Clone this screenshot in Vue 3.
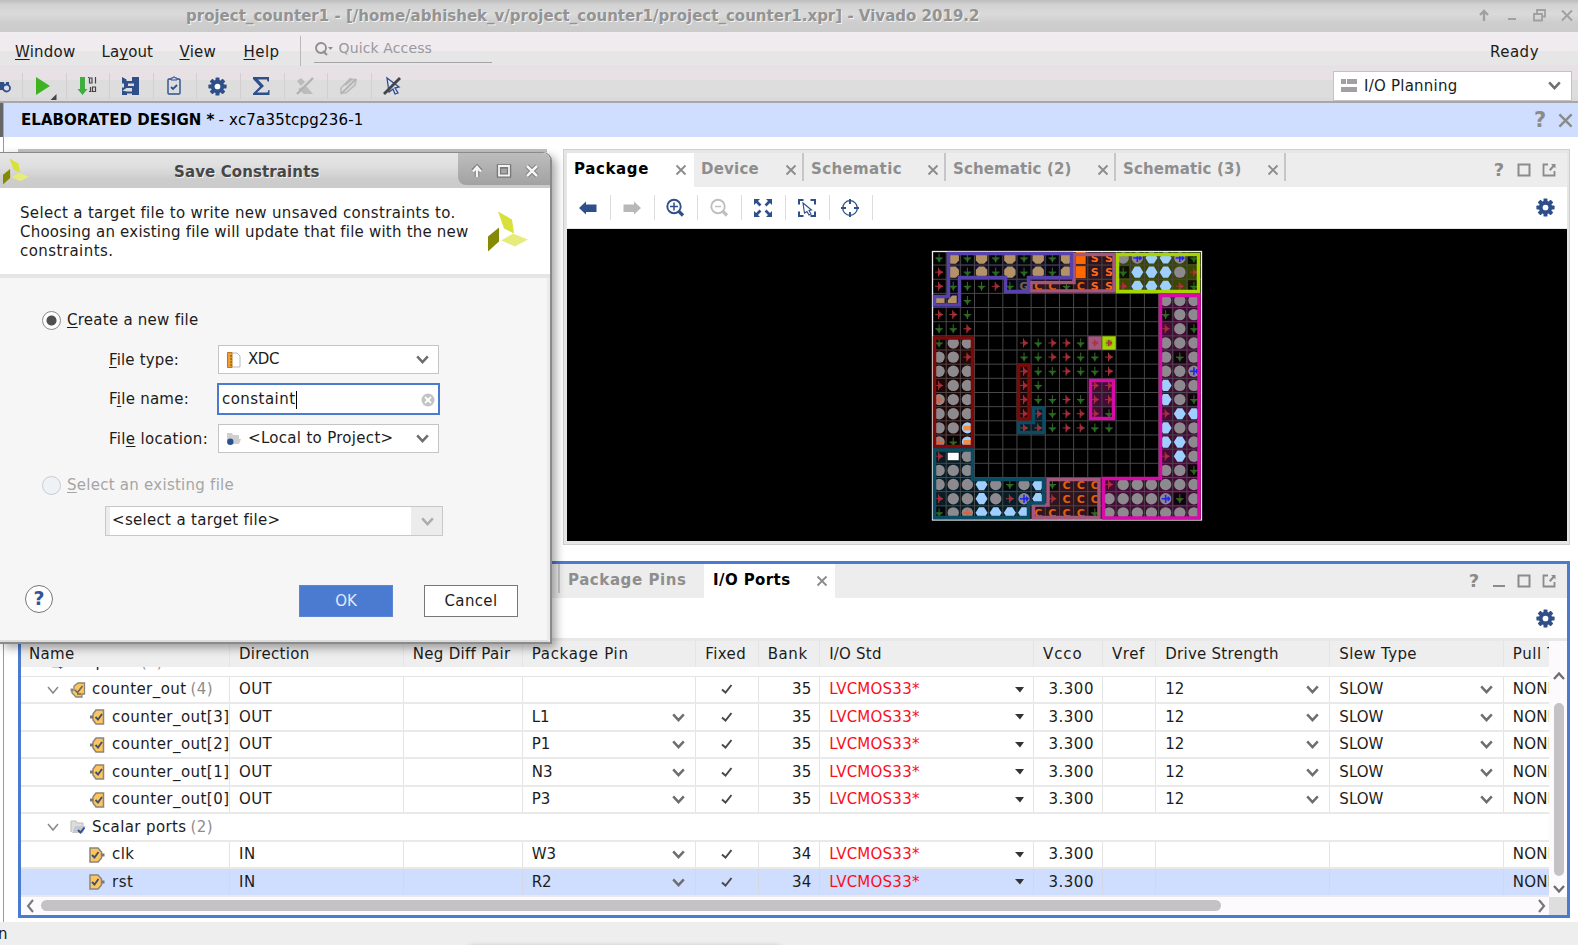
<script setup>
// Spreads the letters of an element so that its text fills the given width.
const vFit = {
  mounted(el, { value }) {
    if (!value) return
    const w = el.getBoundingClientRect().width
    el.style.letterSpacing = (value + 1.5 - w) / el.textContent.length + 'px'
  }
}

const cellMap = [
  'gtgtgtgtgtsSSoBbbBg',
  'rtgtgtgtgtsSSgbbbor',
  'rgggrgGCCgCSSrbbbrg',
  'TUg.............ooo',
  'rrg.............goo',
  'ggr.............rog',
  'goo...rgrrgrr...ooo',
  'oor...ggrrggr...ogo',
  'ooo...rggrggr...ooB',
  'roo...rg...rr...boo',
  'Poo...rggrgrr...bog',
  'ooo...rrgrrrg...rbb',
  'ooQ...rrgrrgg...boo',
  'PgQ.............bbo',
  'rwo.............rbo',
  'ooo.............oog',
  'ooobogobgCCCroooooo',
  'rooborBbrCCCooooBgo',
  'goPbbbbCCCCgooooooo'
]
const P = 14.16
const cells = []
cellMap.forEach((row, r) =>
  [...row].forEach((k, c) => {
    if (k !== '.') cells.push({ k, x: 932 + P * (c + 0.5), y: 250.9 + P * (r + 0.5), id: r * 19 + c })
  })
)
const lines = Array.from({ length: 18 }, (_, i) => i + 1)

const mainTools = ['play', 'bits', 'hier', 'clip', 'gear', 'sigma', 'noflask', 'nopen', 'nocursor']
const viewTools = ['left', 'right', 'zin', 'zout', 'expand', 'select', 'target']
const tabs = [
  { t: 'Package', f: 73.5, w: 127, on: true },
  { t: 'Device', f: 56.5, w: 110 },
  { t: 'Schematic', f: 89.5, w: 142 },
  { t: 'Schematic (2)', f: 117, w: 170 },
  { t: 'Schematic (3)', f: 117, w: 170 }
]
const heads = [
  ['Name', 44], ['Direction', 69], ['Neg Diff Pair', 96], ['Package Pin', 95.5], ['Fixed', 39.5], ['Bank', 38.5],
  ['I/O Std', 51], ['Vcco', 38], ['Vref', 31.5], ['Drive Strength', 112], ['Slew Type', 76], ['Pull Type', 70]
]
const rows = [
  { n: 'counter_out', f: 93, cnt: '(4)', icon: 'bus', dir: 'OUT', bank: 35, out: true },
  { n: 'counter_out[3]', f: 116, icon: 'oport', dir: 'OUT', pin: 'L1', bank: 35, out: true },
  { n: 'counter_out[2]', f: 116, icon: 'oport', dir: 'OUT', pin: 'P1', bank: 35, out: true },
  { n: 'counter_out[1]', f: 116, icon: 'oport', dir: 'OUT', pin: 'N3', bank: 35, out: true },
  { n: 'counter_out[0]', f: 116, icon: 'oport', dir: 'OUT', pin: 'P3', bank: 35, out: true },
  { n: 'Scalar ports', f: 93, cnt: '(2)', icon: 'folder', group: true },
  { n: 'clk', f: 21, icon: 'iport', dir: 'IN', pin: 'W3', bank: 34 },
  { n: 'rst', f: 20, icon: 'iport', dir: 'IN', pin: 'R2', bank: 34, sel: true }
]
</script>

<template>
  <div class="app">
    <svg class="defs" width="0" height="0">
      <symbol id="gear" viewBox="-9 -9 18 18">
        <g fill="#2f4f8a"><circle r="6.3" /><g v-for="a in 8" :key="a"><rect x="-1.9" y="-8.6" width="3.8" height="4" rx=".6" :transform="`rotate(${a * 45})`" /></g></g>
        <circle r="2.7" fill="#fff" />
      </symbol>
      <symbol id="play" viewBox="-18 -15 36 30"><path d="M-7-9L7 0L-7 9z" fill="#3db320" /><path d="M13.500 8v6H7.500z" fill="#444" /></symbol>
      <symbol id="bits" viewBox="-18 -15 36 30"><path d="M-7-9h5V3h2.500l-5 6l-5-6h2.500z" fill="#3fae3f" /><g stroke="#444" stroke-width="1.200" fill="none"><path d="M2.500-8h2.500v5h-2.500zM8.500-9v6.500M1-8.500h1M3.500 1v5M5.500 1h3v4.500h-3zM2 5.500h2.500" /></g></symbol>
      <symbol id="hier" viewBox="-18 -15 36 30"><path d="M-8-9L-3.500-6.500V-5H2V-9H9V9H2V2H-3.500L-8 5V1.500H-6V-2.500H-8z M-2-2.500V0H4V-2.500z" fill="#2f4f8a" fill-rule="evenodd" /><path d="M-8 4.500L-3 5.500H2V7.500H-3V9H-8z" fill="#2f4f8a" /></symbol>
      <symbol id="clip" viewBox="-18 -15 36 30"><rect x="-6" y="-7" width="12" height="15" rx="1" fill="none" stroke="#2f4f8a" stroke-width="1.400" /><path d="M-3-6v-2h2v-1h2v1h2v2z" fill="#cdd8ee" stroke="#2f4f8a" /><path d="M-3 1l2 2l4-4" fill="none" stroke="#2f4f8a" stroke-width="1.800" /></symbol>
      <symbol id="sigma" viewBox="-18 -15 36 30"><path d="M-8-9H8v4.500H6.500L6-6.500H-3L3 0L-4 6.500H6.500L7.500 4H8.500V9H-8V7.500L-1 0.500L-8-7z" fill="#2f4f8a" /></symbol>
      <symbol id="noflask" viewBox="-18 -15 36 30"><path d="M-8-5l4-3l4 4l-4 4z M-7 3l4-2l5 0l6 7h-9z" fill="#bcbcbc" /><path d="M8-8L-8 8" stroke="#b2b2b2" stroke-width="2.400" /></symbol>
      <symbol id="nopen" viewBox="-18 -15 36 30"><path d="M-7 7l0-5l9-9l6 1l-1 5l-9 8z" fill="none" stroke="#bcbcbc" stroke-width="1.700" /><path d="M8-7L-7 8M-3-1l7-6" stroke="#b5b5b5" stroke-width="2" /></symbol>
      <symbol id="nocursor" viewBox="-18 -15 36 30"><path d="M-5-8L7 1L3 2l3 5l-3 1l-2-5l-4 3z" fill="#dce4f4" stroke="#2f4f8a" stroke-width="1.300" /><path d="M8-8L-8 8" stroke="#444" stroke-width="2.800" /></symbol>
      <symbol id="left" viewBox="-18 -15 36 30"><path d="M-9 0L-2-6.500V-3.500H8.500V4H-2V6.500z" fill="#2f4f8a" /></symbol>
      <symbol id="right" viewBox="-18 -15 36 30"><path d="M9 0L2-6.500V-3.500H-8.500V4H2V6.500z" fill="#b9b7b9" /></symbol>
      <symbol id="zin" viewBox="-18 -15 36 30"><g fill="none" stroke="#2f4f8a"><circle cx="-1" cy="-1.500" r="6.700" stroke-width="1.900" /><path d="M3.500 3L8 7.500" stroke-width="3.200" /><path d="M-5-1.500h8M-1-5.500v8" stroke-width="1.500" /></g></symbol>
      <symbol id="zout" viewBox="-18 -15 36 30"><g fill="none" stroke="#bfbfbf"><circle cx="-1" cy="-1.500" r="6.700" stroke-width="1.900" /><path d="M3.500 3L8 7.500" stroke-width="3.200" /><path d="M-4-1.500h6" stroke-width="1.500" /></g></symbol>
      <symbol id="expand" viewBox="-18 -15 36 30"><g v-for="a in 4" :key="a" :transform="`rotate(${a * 90})`"><path d="M9-9V-3L6.900-5L3.500-1.600L1.600-3.500L5-6.900L3-9z" fill="#2f4f8a" /></g></symbol>
      <symbol id="select" viewBox="-18 -15 36 30"><g v-for="a in 4" :key="a" :transform="`rotate(${a * 90})`"><path d="M3.500-8H8V-3.500" fill="none" stroke="#2f4f8a" stroke-width="2" /></g><path d="M-4-5L4.500 2L2 2.500L4 6L2 7L0 3.500L-2.500 5z" fill="#fff" stroke="#2f4f8a" stroke-width="1.100" /></symbol>
      <symbol id="target" viewBox="-18 -15 36 30"><g fill="none" stroke="#2f4f8a"><circle r="7.300" stroke-width="1.300" /><path d="M0-9v5M0 9v-5M-9 0h5M9 0h-5" stroke-width="1.900" /></g></symbol>
      <symbol id="x" viewBox="-7 -7 14 14"><path d="M-4.500-4.500L4.500 4.500M4.500-4.500L-4.500 4.500" stroke="#8b8b8b" stroke-width="1.800" /></symbol>
      <symbol id="chev" viewBox="-8 -8 16 16"><path d="M-5-3L0 2.500L5-3" fill="none" stroke="#6e6e6e" stroke-width="2.300" /></symbol>
      <symbol id="thin" viewBox="-8 -8 16 16"><path d="M-5-3L0 3L5-3" fill="none" stroke="#888" stroke-width="1.500" /></symbol>
      <symbol id="sq" viewBox="-8 -8 16 16"><rect x="-5.500" y="-5.500" width="11" height="11" fill="none" stroke="#8b8b8b" stroke-width="2" /></symbol>
      <symbol id="pop" viewBox="-8 -8 16 16"><path d="M-1-5.500H-5.500V5.500H5.500V1" fill="none" stroke="#8b8b8b" stroke-width="1.800" /><path d="M2-6H6.500V-1.500L5-3L1.500 1L0-0.500L3.500-4.500z" fill="#8b8b8b" /></symbol>
      <symbol id="min" viewBox="-8 -8 16 16"><path d="M-6 5H6" stroke="#8b8b8b" stroke-width="2" /></symbol>
      <symbol id="logo" viewBox="0 0 40 40"><path d="M10 0L24 8L26 22L16 17z" fill="#d8e03a" /><path d="M0 25L11 16V30L0 40z" fill="#858a04" /><path d="M13 29L25 22L40 28L27 35z" fill="#e6ec7c" /></symbol>
      <symbol id="oport" viewBox="0 0 16 16"><path d="M1 8h3M4 5L7 1H14.500V15H7L4 11z" fill="#fdc55d" stroke="#8a857c" stroke-width="1.500" /><path d="M1 6.500h3v3H1z" fill="#777" /><path d="M6.500 8l2.500 2.500l4-5.500" fill="none" stroke="#44506a" stroke-width="1.900" /></symbol>
      <symbol id="iport" viewBox="0 0 16 16"><path d="M1 1H9L12.500 5V11L9 15H1z" fill="#fdc55d" stroke="#8a857c" stroke-width="1.500" /><path d="M12.500 6.500h3v3h-3z" fill="#777" /><path d="M3 8l2.500 2.500l4-5.500" fill="none" stroke="#44506a" stroke-width="1.900" /></symbol>
      <symbol id="bus" viewBox="0 0 16 16"><path d="M4 4L8 1H14.500V12H12V15H6L2 11V8H4z" fill="#fdc55d" stroke="#8a857c" stroke-width="1.300" /><path d="M.5 6.500h2.500v3H.5z" fill="#888" /><path d="M5 8l2.500 2.500l5-6.500M7 12h4" fill="none" stroke="#6e6658" stroke-width="1.600" /></symbol>
      <symbol id="folder" viewBox="0 0 16 16"><path d="M1 13V2h5l1 2h6v3" fill="#ddd" stroke="#bbb" /><path d="M2 14L5 7H15.500L13 14z" fill="#c6c8cc" /><path d="M8 11l2.500 2.500l4-5" fill="none" stroke="#2f4f9a" stroke-width="2" /></symbol>
      <symbol id="cp" viewBox="-7 -7 14 14"><path d="M0-4.500V4.500M-3.800 0H3.800" stroke="#3a6a2a" stroke-width="1" /><path d="M-3.500 0L0 4L3.500 0z" fill="#2c7a24" fill-opacity=".75" /></symbol>
      <symbol id="cr" viewBox="-7 -7 14 14"><path d="M-4 0H4M-0.500-4.500V4.500" stroke="#9c3434" stroke-width="1" /><path d="M-0.500-3.500L4 0L-0.500 3.500z" fill="#b83040" fill-opacity=".8" /></symbol>
    </svg>

    <header class="titlebar">
      <span v-fit="792" class="wtitle">project_counter1 - [/home/abhishek_v/project_counter1/project_counter1.xpr] - Vivado 2019.2</span>
      <svg class="wbtns" width="100" height="20" viewBox="1478 5 100 20" fill="none" stroke="#a0a0a0" stroke-width="2">
        <path d="M1484 20V10M1480 14L1484 10L1488 14" stroke-width="2.400" /><path d="M1508 18H1516" />
        <path d="M1534 13H1542V19.500H1534zM1537 12V9H1545V15.500H1543" stroke-width="1.800" /><path d="M1562 9.500L1572 19.500M1572 9.500L1562 19.500" />
      </svg>
    </header>

    <div class="chrome">
      <nav class="menu">
        <div class="m1"><span v-fit="59"><u>W</u>indow</span></div>
        <div class="m2"><span v-fit="50">La<u>y</u>out</span></div>
        <div class="m3"><span v-fit="35"><u>V</u>iew</span></div>
        <div class="m4"><span v-fit="34.5"><u>H</u>elp</span></div>
        <div class="quick">
          <svg width="20" height="16" viewBox="0 0 20 16"><circle cx="7" cy="7" r="5" fill="none" stroke="#8f8f8f" stroke-width="1.900" /><path d="M9 10l4 4" stroke="#8f8f8f" stroke-width="2" /><path d="M14 6h5l-2.500 3z" fill="#8f8f8f" /></svg>
          <span v-fit="92">Quick Access</span>
        </div>
        <span class="ready"><span v-fit="47.5">Ready</span></span>
      </nav>
      <div class="tools">
        <div class="first"><svg width="12" height="16" viewBox="0 0 12 16"><path d="M0 3h4l1 4h1V3h3v8H0z" fill="#2f4f8a" /><circle cx="6.500" cy="9" r="3.500" fill="#dde" stroke="#2f4f8a" stroke-width="1.800" /></svg></div>
        <div v-for="t in mainTools" :key="t" class="tool"><svg :width="t === 'gear' ? 19 : 36" :height="t === 'gear' ? 19 : 30"><use :href="'#' + t" /></svg></div>
        <div class="plan">
          <svg width="16" height="14"><path d="M0 0h5v5H0zM6 0h10v5H6zM0 8h16v5H0z" fill="#a29fa3" /></svg>
          <span v-fit="92">I/O Planning</span>
          <svg class="end" width="17" height="17"><use href="#chev" /></svg>
        </div>
      </div>
    </div>

    <div class="design">
      <b v-fit="192">ELABORATED DESIGN *</b><span v-fit="143.500" class="part">- xc7a35tcpg236-1</span>
      <i class="q big">?</i><svg width="19" height="19"><use href="#x" /></svg>
    </div>

    <main class="work">
      <div class="behind"></div>
      <section class="pkg">
        <div class="tabs">
          <div v-for="t in tabs" :key="t.t" class="tab" :class="{ on: t.on }" :style="{ width: t.w + 'px' }">
            <span v-fit="t.f">{{ t.t }}</span><svg width="14" height="14"><use href="#x" /></svg>
          </div>
          <div class="pbtns"><i class="q">?</i><svg width="16" height="16"><use href="#sq" /></svg><svg width="16" height="16"><use href="#pop" /></svg></div>
        </div>
        <div class="ptools">
          <div v-for="t in viewTools" :key="t" class="pt"><svg width="36" height="30"><use :href="'#' + t" /></svg></div>
          <svg class="end" width="19" height="19"><use href="#gear" /></svg>
        </div>
        <svg class="canvas" width="1000" height="312" viewBox="567 229 1000 312">
          <rect x="567" y="229" width="1000" height="312" fill="#000" />
          <g stroke="none">
            <path d="M948.500 253H1072V277H1028V291H1005V277H959V305H934V296H948z" fill="#15102c" />
            <path d="M1031 282H1074V253H1114V292H1031zM1048 479H1099V518H1033V505H1048z" fill="#2e141c" />
            <rect x="1117" y="254" width="82" height="38" fill="#3a4700" />
            <path d="M1160 296H1199V518H1103.500V478.500H1160zM1090 380H1113V418H1090z" fill="#450a38" />
            <path d="M934 338H972V446H934zM1019 365H1029V418H1019z" fill="#220404" />
            <path d="M934 450H972.500V479.500H1043V502H1028V518H934zM1019 423H1033V408H1044V433H1019z" fill="#061c26" />
            <path d="M1090 338h10v10h-10z" fill="#a3577f" /><path d="M1104 338h10v10h-10z" fill="#8fae10" />
          </g>
          <g stroke="#484848" stroke-width="1">
            <path v-for="i in lines" :key="'v' + i" :d="`M${932 + P * i} 252V520`" />
            <path v-for="i in lines" :key="'h' + i" :d="`M932 ${250.9 + P * i}H1201`" />
          </g>
          <g v-for="c in cells" :key="c.id" :transform="`translate(${c.x} ${c.y})`">
            <rect v-if="c.k === 'g'" x="-6" y="-6" width="12" height="12" fill="#000" fill-opacity=".75" />
            <use v-if="c.k === 'g'" href="#cp" x="-7" y="-7" width="14" height="14" />
            <use v-else-if="c.k === 'r'" href="#cr" x="-7" y="-7" width="14" height="14" />
            <circle v-else-if="'oBP'.includes(c.k)" r="5.700" fill="#8c8a8e" />
            <path v-else-if="c.k === 't'" d="M-2.500-5.700H2.500L5.700-2.500V2.500L2.500 5.700H-2.500L-5.700 2.500V-2.500z" fill="#b29266" />
            <rect v-else-if="c.k === 'T'" x="-4.500" y="-3.500" width="10" height="6" fill="#b29266" />
            <path v-else-if="c.k === 'U'" d="M-5.500 2.500V-0.500L-1-5H3.500V2.500z" fill="#b29266" />
            <path v-else-if="c.k === 'b'" d="M-2.500-5.600H2.500L6 0L2.500 5.600H-2.500L-6 0z" fill="#9fcfff" />
            <rect v-else-if="c.k === 's'" x="-5" y="-6" width="10" height="12" fill="#ff6a00" />
            <rect v-else-if="c.k === 'w'" x="-5.500" y="-3.500" width="11" height="7.500" fill="#fff" />
            <g v-else-if="c.k === 'Q'"><circle r="5.600" fill="#9fcfff" /><rect x="-4" y="-2" width="9" height="4.500" fill="#f09040" /></g>
            <text v-else y="4" text-anchor="middle" class="cl" :fill="c.k === 'G' ? '#75664c' : c.k === 'S' ? '#ff6a1a' : '#e25f0c'">{{ c.k }}</text>
            <path v-if="c.k === 'B'" d="M-4 0H4M0-4V4M2-2L4 0L2 2" fill="none" stroke="#2323f0" stroke-width="1.600" />
            <path v-if="c.k === 'P'" d="M-4 0H4M0-4V4" fill="none" stroke="#e0603a" stroke-width="1.800" />
          </g>
          <rect x="932.500" y="251.500" width="269" height="268.500" fill="none" stroke="#eee" stroke-width="1.300" />
          <g fill="none" stroke-width="3.500">
            <path d="M1031 282.500H1074V254.500H1114V291H1031zM1048 479.500H1099V517.500H1033.500V505H1048zM1090 338h10v10h-10z" stroke="#a3577f" />
            <path d="M948.500 253.500H1071.500V277.500H1028.500V291.500H1005.500V277.500H959.500V305H934.500V296.500H948.500z" stroke="#5642aa" />
            <path d="M1117.500 254.500H1198.500V291.500H1117.500zM1104 338h10v10h-10z" stroke="#a6d600" />
            <path d="M1160.500 295.500H1199V518H1103.500V478.500H1160.500zM1090.500 380.500H1113.500V418.500H1090.500z" stroke="#d80aa8" />
            <path d="M934.500 338H972.500V446.500H934.500zM1018.500 365H1029V419H1018.500z" stroke="#7d0a0a" />
            <path d="M934.500 450H972.500V479.500H1043.500V503H1028.500V517.500H934.500zM1018.500 422.500H1033.500V408H1044V432.500H1018.500z" stroke="#0c4c63" />
          </g>
        </svg>
      </section>

      <section class="io">
        <div class="tabs">
          <div class="tab hidden"></div>
          <div class="tab pins"><span v-fit="117">Package Pins</span></div>
          <div class="tab on ports"><span v-fit="76">I/O Ports</span><svg width="14" height="14"><use href="#x" /></svg></div>
          <div class="pbtns"><i class="q">?</i><svg width="16" height="16"><use href="#min" /></svg><svg width="16" height="16"><use href="#sq" /></svg><svg width="16" height="16"><use href="#pop" /></svg></div>
        </div>
        <div class="iotools"><svg width="19" height="19"><use href="#gear" /></svg></div>
        <div class="tablewrap">
          <div class="table">
            <div class="row head"><div v-for="h in heads" :key="h[0]" :class="'h' + h[0][0]"><span v-fit="h[1]">{{ h[0] }}</span></div></div>
            <div class="rest"><svg width="16" height="16"><use href="#folder" /></svg><span>All ports <em>(6)</em></span></div>
            <div v-for="r in rows" :key="r.n" class="row" :class="{ sel: r.sel, group: r.group }">
              <div class="name" :class="{ leaf: !r.cnt }">
                <svg v-if="r.cnt" class="tw" width="16" height="16"><use href="#thin" /></svg>
                <svg width="16" height="16"><use :href="'#' + r.icon" /></svg>
                <span v-fit="r.f">{{ r.n }}</span><em v-if="r.cnt" v-fit="21">{{ r.cnt }}</em>
              </div>
              <template v-if="!r.group">
                <div><span v-fit="r.dir === 'OUT' ? 31.5 : 15.5">{{ r.dir }}</span></div>
                <div></div>
                <div><template v-if="r.pin"><span>{{ r.pin }}</span><svg class="end" width="17" height="17"><use href="#chev" /></svg></template></div>
                <div class="mid"><svg width="14" height="12"><path d="M2 6.500L5.500 9.500L11.500 2" fill="none" stroke="#4a4a4a" stroke-width="2" /></svg></div>
                <div class="num"><span>{{ r.bank }}</span></div>
                <div><span v-fit="89" class="red">LVCMOS33*</span><svg class="end tri" width="10" height="6"><path d="M0 0H9L5 5.500z" fill="#333" /></svg></div>
                <div class="num"><span v-fit="44">3.300</span></div>
                <div></div>
                <div><template v-if="r.out"><span>12</span><svg class="end" width="17" height="17"><use href="#chev" /></svg></template></div>
                <div><template v-if="r.out"><span v-fit="42.500">SLOW</span><svg class="end" width="17" height="17"><use href="#chev" /></svg></template></div>
                <div class="last"><span v-fit="43">NONE</span></div>
              </template>
            </div>
          </div>
          <div class="vs"><svg width="16" height="16" class="up"><use href="#chev" /></svg><div class="vthumb"></div><svg width="16" height="16"><use href="#chev" /></svg></div>
        </div>
        <div class="hs">
          <svg width="12" height="16" viewBox="0 0 12 16"><path d="M9 2L4 8L9 14" fill="none" stroke="#777" stroke-width="2" /></svg>
          <div class="hthumb"></div>
          <svg class="end" width="12" height="16" viewBox="0 0 12 16"><path d="M3 2L8 8L3 14" fill="none" stroke="#777" stroke-width="2.200" /></svg>
          <div class="corner"></div>
        </div>
      </section>
    </main>

    <footer class="status">n<div class="glow"></div></footer>

    <div class="dialog">
      <div class="dtitle">
        <svg class="slogo" width="26" height="27"><use href="#logo" /></svg>
        <b v-fit="144">Save Constraints</b>
        <div class="dbtns">
          <svg width="93" height="32" viewBox="458 153 93 32" fill="none"><g stroke="#777" stroke-width="4.500"><path d="M477 177V168M473 171L477 167L481 171" /><path d="M499 166.500H509V175.500H499z" /><path d="M527 166L537 176M537 166L527 176" /></g><g stroke="#f4f4f4" stroke-width="2.500"><path d="M477 177V168M473 171.500L477 167L481 171.500" /><path d="M499 166H509V175.500H499z" stroke-width="1.800" /><path d="M527 166L537 176M537 166L527 176" /></g><path d="M502 169h4v3.500h-4z" fill="#a5a5a5" /></svg>
        </div>
      </div>
      <div class="dmsg">
        <div class="lines"><span v-fit="434">Select a target file to write new unsaved constraints to.</span><span v-fit="447">Choosing an existing file will update that file with the new</span><span v-fit="92">constraints.</span></div>
        <svg width="40" height="41"><use href="#logo" /></svg>
      </div>
      <div class="dbody">
        <div class="radio"><i class="dot on"></i><span v-fit="130"><u>C</u>reate a new file</span></div>
        <div class="field f1"><label><span v-fit="68.500"><u>F</u>ile type:</span></label>
          <div class="combo"><svg width="14" height="16" viewBox="0 0 14 16"><path d="M4 1H10L13 4V15H4z" fill="#fff" stroke="#b5b9bd" /><path d="M.5.500H5V15.500H.5z" fill="#f0a030" stroke="#b87a20" /><path d="M3 4h2M3 7h2M3 10h2M3 13h2" stroke="#7a5010" /></svg><span v-fit="29.500">XDC</span><svg class="end" width="17" height="17"><use href="#chev" /></svg></div></div>
        <div class="field f2"><label><span v-fit="78.500">F<u>i</u>le name:</span></label>
          <div class="input"><span v-fit="72">constaint</span><i class="caret"></i><svg class="end" width="14" height="14" viewBox="-7 -7 14 14"><circle r="6.500" fill="#c3c3c3" /><path d="M-3-3L3 3M3-3L-3 3" stroke="#fff" stroke-width="1.800" /></svg></div></div>
        <div class="field f3"><label><span v-fit="97.500">Fil<u>e</u> location:</span></label>
          <div class="combo"><svg width="14" height="14" viewBox="0 0 14 14"><path d="M0 8V1h5l1 2h6v4h2l-2 5H5z" fill="#cfcfcf" /><circle cx="3.300" cy="9.800" r="3.200" fill="#2b4f94" /></svg><span v-fit="144">&lt;Local to Project&gt;</span><svg class="end" width="17" height="17"><use href="#chev" /></svg></div></div>
        <div class="radio off"><i class="dot"></i><span v-fit="165.500"><u>S</u>elect an existing file</span></div>
        <div class="target"><span class="tv"><span v-fit="167">&lt;select a target file&gt;</span></span><svg width="17" height="17"><use href="#chev" /></svg></div>
        <div class="acts"><i class="help">?</i><button class="ok"><span v-fit="20">OK</span></button><button class="cancel"><span v-fit="51.500">Cancel</span></button></div>
      </div>
    </div>
  </div>
</template>

<style>
body { overflow: hidden; background: #fff; }
</style>
<style scoped>
* { box-sizing: border-box; }
.app { position: relative; width: 1578px; height: 945px; overflow: hidden; background: #fff; font: 15px/19px "DejaVu Sans", sans-serif; color: #1c1c1c; }
.app span, .app b, .app em { white-space: pre; display: inline-block; flex: none; }
svg { display: block; flex: none; }
.defs { position: absolute; }
i { font-style: normal; }
u { text-decoration: underline; text-underline-offset: 2px; text-decoration-thickness: 1px; text-decoration-skip-ink: none; }
.end { margin-left: auto; }
.titlebar { height: 32px; display: flex; align-items: center; padding-left: 186px; background: linear-gradient(#bdbdbd, #d3d3d3 5px, #dadada 14px, #cecece 22px, #cbcbcb); }
.wtitle { font-weight: bold; font-size: 15px; color: #939393; text-shadow: 1px 1px 0 #f2f2f2; }
.wbtns { margin-left: auto; }
.chrome { height: 71px; border-bottom: 2px solid #aaa5a9; background: linear-gradient(#efefef 2px, #f0ebef 2px 19px, #e6e6e6 19px 33px, #e7e1e5 33px 48px, #dddddd 48px 64px, #dad8da); }
.menu { height: 38px; display: flex; align-items: center; padding: 2px 0 0 15px; }
.m1 { width: 86.500px; } .m2 { width: 78px; } .m3 { width: 64px; }
.m4 { width: 57px; height: 30px; display: flex; align-items: center; border-right: 1px solid #bbb8bb; padding-top: 1px; margin-top: -2px; }
.m4 > span { margin-top: 1px; }
.quick { margin: -6px 0 0 13px; width: 178px; height: 28px; display: flex; align-items: center; gap: 5px; font-size: 14px; color: #999; border-bottom: 1px solid #a5a3a5; }
.ready { margin-left: auto; padding-right: 39px; }
.tools { height: 32px; display: flex; align-items: center; }
.first { width: 22px; height: 28px; padding-top: 7px; }
.tool { width: 43.600px; height: 26px; display: flex; align-items: center; justify-content: center; padding-right: 2px; border-left: 1px solid #d2cfd1; }
.plan { margin: -1px 6px 0 auto; width: 239px; height: 30px; background: #fff; border: 1px solid #c4c2c4; display: flex; align-items: center; padding: 0 8px 0 7px; gap: 7px; }
.plan > span { margin-top: 1px; }
.design { height: 34px; background: #cfdeff; border-left: 3px solid #666; box-shadow: inset 1px 0 #aaa; display: flex; align-items: center; padding: 0 3px 0 18px; color: #000; }
.part { margin-left: 4px; }
.q { font: bold 18px/18px "DejaVu Sans", sans-serif; color: #8b8b8b; width: 16px; text-align: center; }
.q.big { font-size: 21px; margin: 0 6px 0 auto; width: 20px; }
.work { height: 785px; margin-left: 3px; border-left: 1px solid #9a9a9a; padding: 12px 8px 0 14px; display: grid; grid-template: 396px 357px / 545px 1007px; row-gap: 16px; column-gap: 0; }
.behind { border-top: 3px solid #c2c2c2; margin-right: 16px; background: #eee; }
.pkg { border: 1px solid #cfcfcf; padding: 3px 2px 3px 3px; background: #e6e6e6; }
.tabs { display: flex; height: 34px; background: #ededed; font-weight: bold; color: #8e8e8e; }
.tab { position: relative; display: flex; align-items: center; justify-content: space-between; padding: 0 6px 2px 7px; }
.tab svg { position: relative; top: 1px; }
.tab:not(.on):not(.hidden)::after { content: ""; position: absolute; right: 0; top: 0; width: 2px; height: 28px; background: #c6c6c8; }
.tab.on { background: #fff; color: #000; }
.pbtns { margin-left: auto; display: flex; align-items: center; gap: 9px; padding: 0 10px 0 0; }
.ptools { height: 41px; background: #fff; display: flex; align-items: center; padding-right: 12px; margin-bottom: 1px; }
.pt { width: 43.750px; height: 25px; display: flex; align-items: center; justify-content: center; padding-right: 1px; border-right: 1px solid #dcdcdc; }
.canvas { margin-right: -1px; }
.cl { font: bold 11px "DejaVu Sans", sans-serif; }
.io { grid-column: 1 / -1; border: 3px solid #4b7bd0; background: #fff; overflow: hidden; }
.hidden { width: 539px; border-right: 2px solid #c6c6c8; height: 29px; padding: 0; }
.pins { width: 144px; padding-left: 8px; }
.io .pins::after { display: none; }
.ports { width: 131px; padding-left: 9px; }
.io .pbtns { padding-right: 10px; }
.iotools { height: 43px; border-bottom: 3px solid #e8e8e8; display: flex; justify-content: flex-end; align-items: center; padding-right: 12px; }
.tablewrap { display: flex; height: 256px; }
.table { width: 1528px; overflow: hidden; flex: none; }
.row { display: grid; grid-template-columns: 209px 173.700px 119px 173.500px 62.500px 61.500px 213.800px 69px 53.200px 174.200px 173.400px 46px; height: 27.500px; border-bottom: 2px solid #e9e9e9; }
.row > div { display: flex; align-items: center; padding: 1px 8px 0 9px; border-right: 1px solid #e4e4e4; overflow: hidden; }
.row > .last { border-right: none; }
.head { height: 26px; background: #eee; border: none; }
.head > div:first-child { padding-left: 8px; }
.rest { height: 9.500px; overflow: hidden; border-bottom: 1px solid #e4e4e4; display: flex; align-items: flex-start; padding-left: 29px; color: #1c1c1c; }
.rest svg { margin: -13px 5px 0 0; }
.rest span { margin-top: -14px; letter-spacing: .3px; }
em { font-style: normal; color: #8c8c8c; }
.row > .name { padding: 1px 0 0 24px; }
.name svg { margin-right: 5px; }
.name .tw { margin-right: 9px; }
.name .tw + svg { margin-right: 6px; }
.name em { margin-left: 4px; }
.row > .leaf { padding-left: 68px; }
.leaf svg { margin-right: 7px; }
.row > .mid { justify-content: center; padding: 0; }
.row > .num { justify-content: flex-end; }
.row.sel { background: #cfdeff; }
.row.sel > div { border-color: #d3d8e4; }
.row.group > div { border: none; }
.row.group { grid-template-columns: 1fr; }
.red { color: #f9101c; }
.vs { width: 18px; background: #fdfafd; padding: 27px 0 0 1px; display: flex; flex-direction: column; align-items: center; }
.up { transform: rotate(180deg); }
.vthumb { width: 10px; height: 173px; margin: 19px 0 5px; border-radius: 5px; background: #c4c2c4; }
.hs { height: 18px; background: #fdfafd; display: flex; align-items: center; padding-left: 3px; }
.hthumb { width: 1180px; height: 11px; border-radius: 6px; background: #c4c2c4; margin: -1px 0 0 5px; }
.corner { width: 18px; height: 18px; background: #dedede; margin-left: 1px; }
.status { position: relative; height: 23px; background: #eee; padding-top: 3px; text-indent: -2px; overflow: hidden; }
.glow { position: absolute; left: 470px; top: 24px; width: 310px; height: 4px; box-shadow: 0 0 5px #bbb; }

.dialog { position: absolute; left: 0; top: 152px; width: 552px; height: 492px; background: #f6f6f6; border: 1px solid #8a8a8a; border-left: none; border-right-width: 2px; border-bottom-width: 2px; border-top-right-radius: 9px; box-shadow: 4px 4px 10px rgba(0, 0, 0, .35); overflow: hidden; }
.dtitle { height: 35px; display: flex; align-items: flex-start; background: linear-gradient(#e6e5e6, #dedede 14px, #cdcdcd 26px, #cbcbcb); }
.slogo { margin: 5px 0 0 3px; }
.dtitle b { color: #474747; text-shadow: 1px 1px 0 #f0f0f0; margin: 10px 0 0 145px; }
.dbtns { margin-left: auto; width: 92px; height: 32px; background: linear-gradient(#bdbdbd, #a2a2a2); border-bottom-left-radius: 8px; }
.dmsg { height: 90px; background: #fff; border-bottom: 4px solid #e5e5e5; display: flex; padding: 16px 22px 0 20px; justify-content: space-between; }
.lines { display: flex; flex-direction: column; align-items: flex-start; line-height: 18.800px; }
.dmsg svg { margin-top: 7px; }
.dbody { border-right: 3px solid #ececec; border-bottom: 2px solid #ddd; height: 364px; padding-top: 32px; }
.radio { display: flex; align-items: center; height: 20px; margin-top: 32px; padding-left: 42px; gap: 6px; }
.radio > span { margin-top: 1px; }
.dbody > .radio:first-child { margin-top: 0; }
.dot { width: 19px; height: 19px; border-radius: 50%; border: 1px solid #8a8a8a; background: #fff; }
.dot.on { background: radial-gradient(#505050 0 4.500px, #fff 5.500px); }
.dbody > .off { color: #a5a5a5; margin-top: 22px; }
.off .dot { border-color: #c9ccd0; background: #eef1f6; }
.field { display: flex; align-items: center; padding-left: 109px; }
.field label { width: 109px; padding-top: 1px; }
.f1 { margin-top: 15px; } .f2 { margin-top: 9px; } .f3 { margin-top: 9px; }
.combo { width: 221px; height: 29px; background: #fff; border: 1px solid #c4c4c4; display: flex; align-items: center; padding: 0 7px 0 8px; gap: 7px; }
.input { width: 223px; height: 32px; margin-left: -1px; background: #fff; border: 2px solid #4b7bd0; display: flex; align-items: center; padding: 1px 3px 0 3px; }
.caret { width: 1px; height: 18px; background: #000; }
.target { margin: 11px 0 0 105px; width: 338px; height: 30px; border: 1px solid #c8c8c8; background: #ececec; display: flex; align-items: center; padding-left: 4px; }
.tv { width: 301px; height: 28px; background: #fff; padding: 4px 0 0 2px; margin-right: 8px; }
.target svg { opacity: .5; }
.acts { display: flex; align-items: center; margin: 49px 0 0 25px; height: 32px; }
.help { width: 28px; height: 28px; border-radius: 50%; border: 1.500px solid #777; background: #fff; color: #34549a; font: bold 19px/25px "DejaVu Sans", sans-serif; text-align: center; margin-top: -4px; }
button { font: inherit; padding: 1px 0 0; height: 32px; width: 94px; }
.ok { margin-left: 246px; background: #4b7bd0; border: 1px solid #5c86d2; color: #dfe9ff; }
.cancel { margin-left: 31px; background: #fff; border: 1px solid #777; color: #1c1c1c; }
</style>
